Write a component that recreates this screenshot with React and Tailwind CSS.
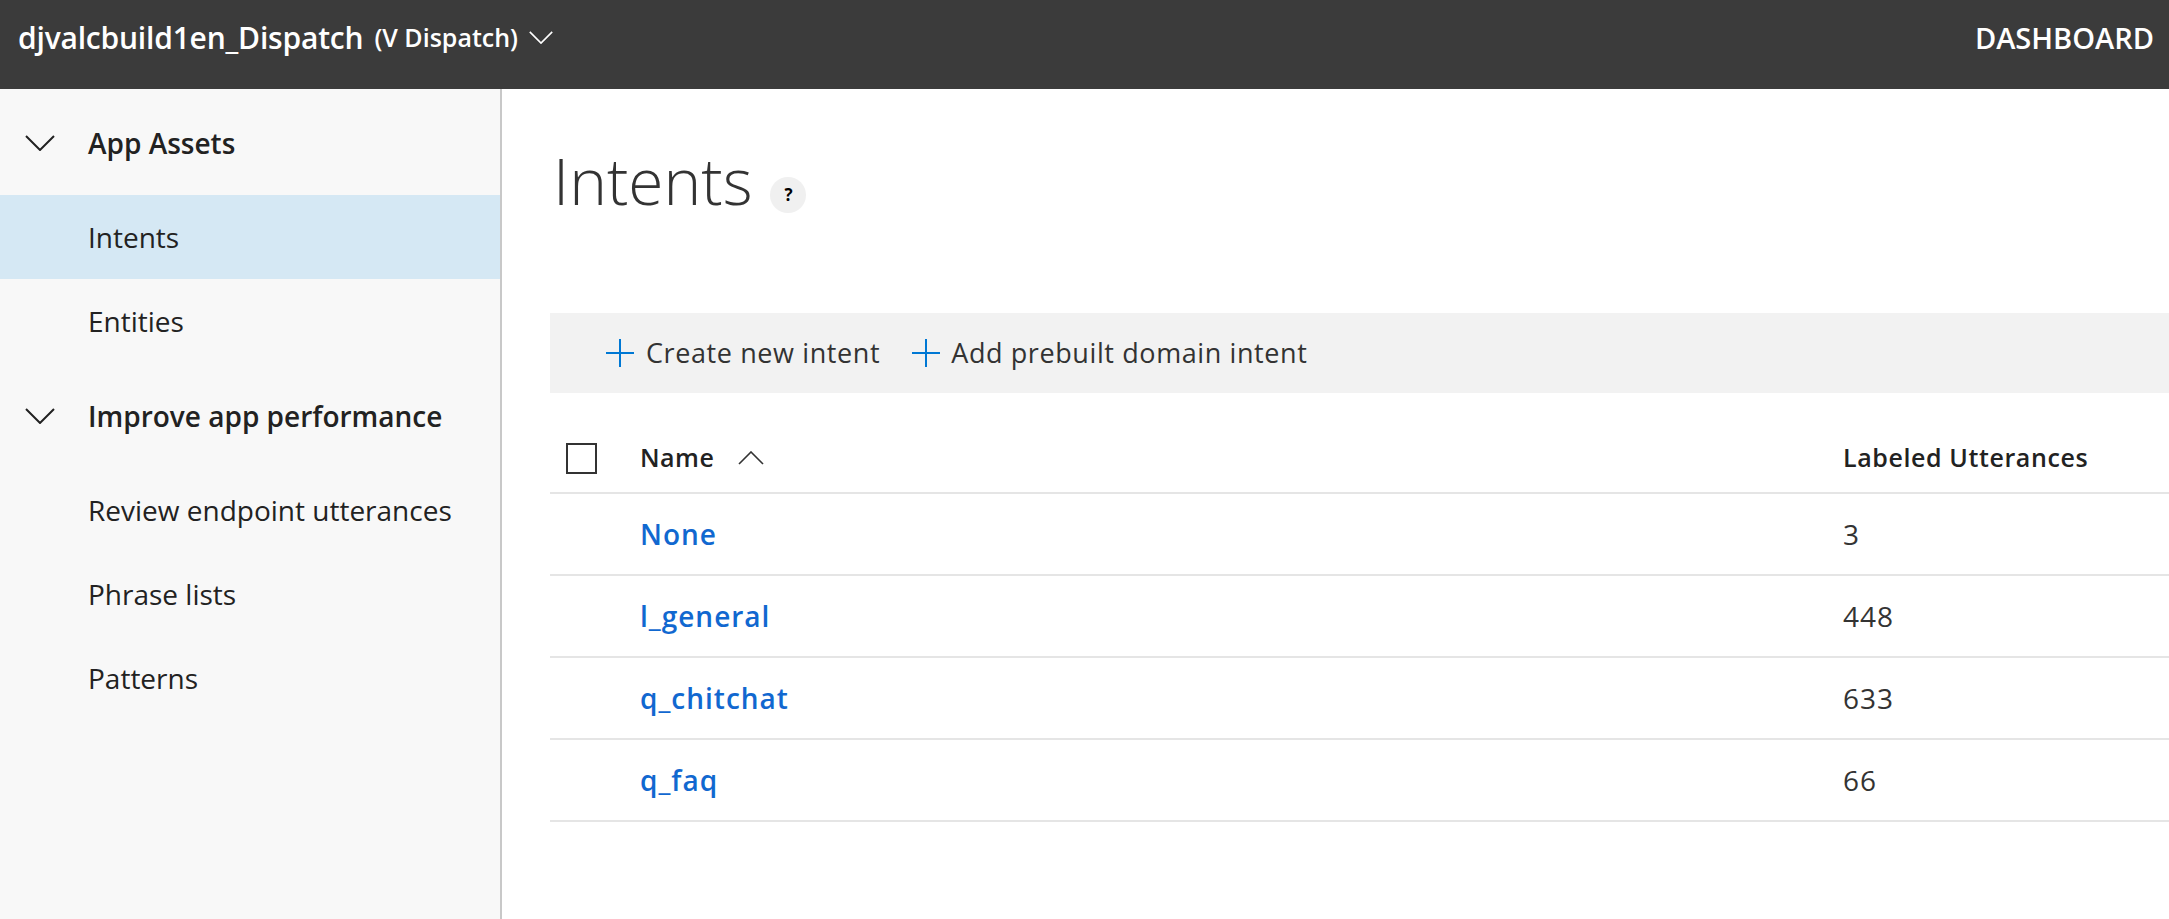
const rows = [
  { name: "None", count: 3 },
  { name: "l_general", count: 448 },
  { name: "q_chitchat", count: 633 },
  { name: "q_faq", count: 66 },
];

const Chevron = ({ className }) => (
  <svg viewBox="0 0 30 16" className={className} fill="none" stroke="currentColor" strokeWidth="2">
    <path d="M1 1 L15 15 L29 1" />
  </svg>
);

const Plus = () => (
  <svg viewBox="0 0 28 28" className="w-[28px] h-[28px] text-[#0078d4]" fill="none" stroke="currentColor" strokeWidth="2">
    <path d="M14 0 V28 M0 14 H28" />
  </svg>
);

const SectionHeader = ({ label }) => (
  <div className="h-[105px] flex items-center text-[#222]">
    <Chevron className="w-[30px] h-[16px] ml-[25px] mr-[33px]" />
    <span className="text-[28px] font-semibold">{label}</span>
  </div>
);

const NavItem = ({ label, active }) => (
  <div className={`h-[84px] flex items-center pl-[88px] text-[28px] text-[#222] ${active ? "bg-[#d5e8f4]" : ""}`}>
    {label}
  </div>
);

export default function App() {
  return (
    <div className="w-[2169px] h-[919px] flex flex-col overflow-hidden bg-white font-['Segoe_UI','Open_Sans',sans-serif]">
      <header className="h-[89px] shrink-0 bg-[#3b3b3b] text-white flex items-center justify-between pb-[14px] pl-[18px] pr-[15px]">
        <div className="flex items-center">
          <span className="text-[30px] font-semibold tracking-[-0.2px]">djvalcbuild1en_Dispatch</span>
          <span className="text-[25px] font-semibold ml-[11px]">(V Dispatch)</span>
          <Chevron className="w-[24px] h-[13px] ml-[11px]" />
        </div>
        <span className="text-[29px] font-semibold">DASHBOARD</span>
      </header>

      <div className="flex flex-1 min-h-0">
        <aside className="w-[502px] shrink-0 bg-[#f8f8f8] border-r-2 border-[#c8c8c8] pt-[1px]">
          <SectionHeader label="App Assets" />
          <NavItem label="Intents" active />
          <NavItem label="Entities" />
          <SectionHeader label="Improve app performance" />
          <NavItem label="Review endpoint utterances" />
          <NavItem label="Phrase lists" />
          <NavItem label="Patterns" />
        </aside>

        <main className="flex-1 pl-[48px]">
          <div className="h-[224px] flex items-start pt-[52px]">
            <h1 className="text-[64px] font-light text-[#333] leading-none pt-[8px] ml-[3px]">Intents</h1>
            <div className="w-[36px] h-[36px] rounded-full bg-[#f0f0f0] flex items-center justify-center text-[17px] font-bold text-black ml-[18px] mt-[36px]">?</div>
          </div>

          <div className="h-[80px] bg-[#f2f2f2] flex items-center pl-[56px] text-[27px] text-[#333] tracking-[0.6px]">
            <Plus />
            <span className="ml-[12px]">Create new intent</span>
            <span className="ml-[32px]"><Plus /></span>
            <span className="ml-[11px]">Add prebuilt domain intent</span>
          </div>

          <div className="mt-[19px]">
            <div className="h-[82px] flex items-center pt-[12px] border-b-2 border-[#e5e5e5] text-[25px] font-semibold text-[#222]">
              <div className="w-[90px] flex items-center pl-[16px]">
                <div className="w-[31px] h-[31px] border-2 border-[#333]" />
              </div>
              <div className="w-[1203px] flex items-center">
                <span className="tracking-[0.5px]">Name</span>
                <svg viewBox="0 0 26 14" className="w-[26px] h-[14px] ml-[24px]" fill="none" stroke="#333" strokeWidth="1.6">
                  <path d="M1 13 L13 1 L25 13" />
                </svg>
              </div>
              <span className="tracking-[0.6px]">Labeled Utterances</span>
            </div>
            {rows.map((r) => (
              <div key={r.name} className="h-[82px] flex items-center border-b-2 border-[#e5e5e5] text-[28px] tracking-[1px]">
                <div className="w-[90px]" />
                <div className="w-[1203px] font-semibold text-[#1168d0]">{r.name}</div>
                <span className="text-[#333]">{r.count}</span>
              </div>
            ))}
          </div>
        </main>
      </div>
    </div>
  );
}
